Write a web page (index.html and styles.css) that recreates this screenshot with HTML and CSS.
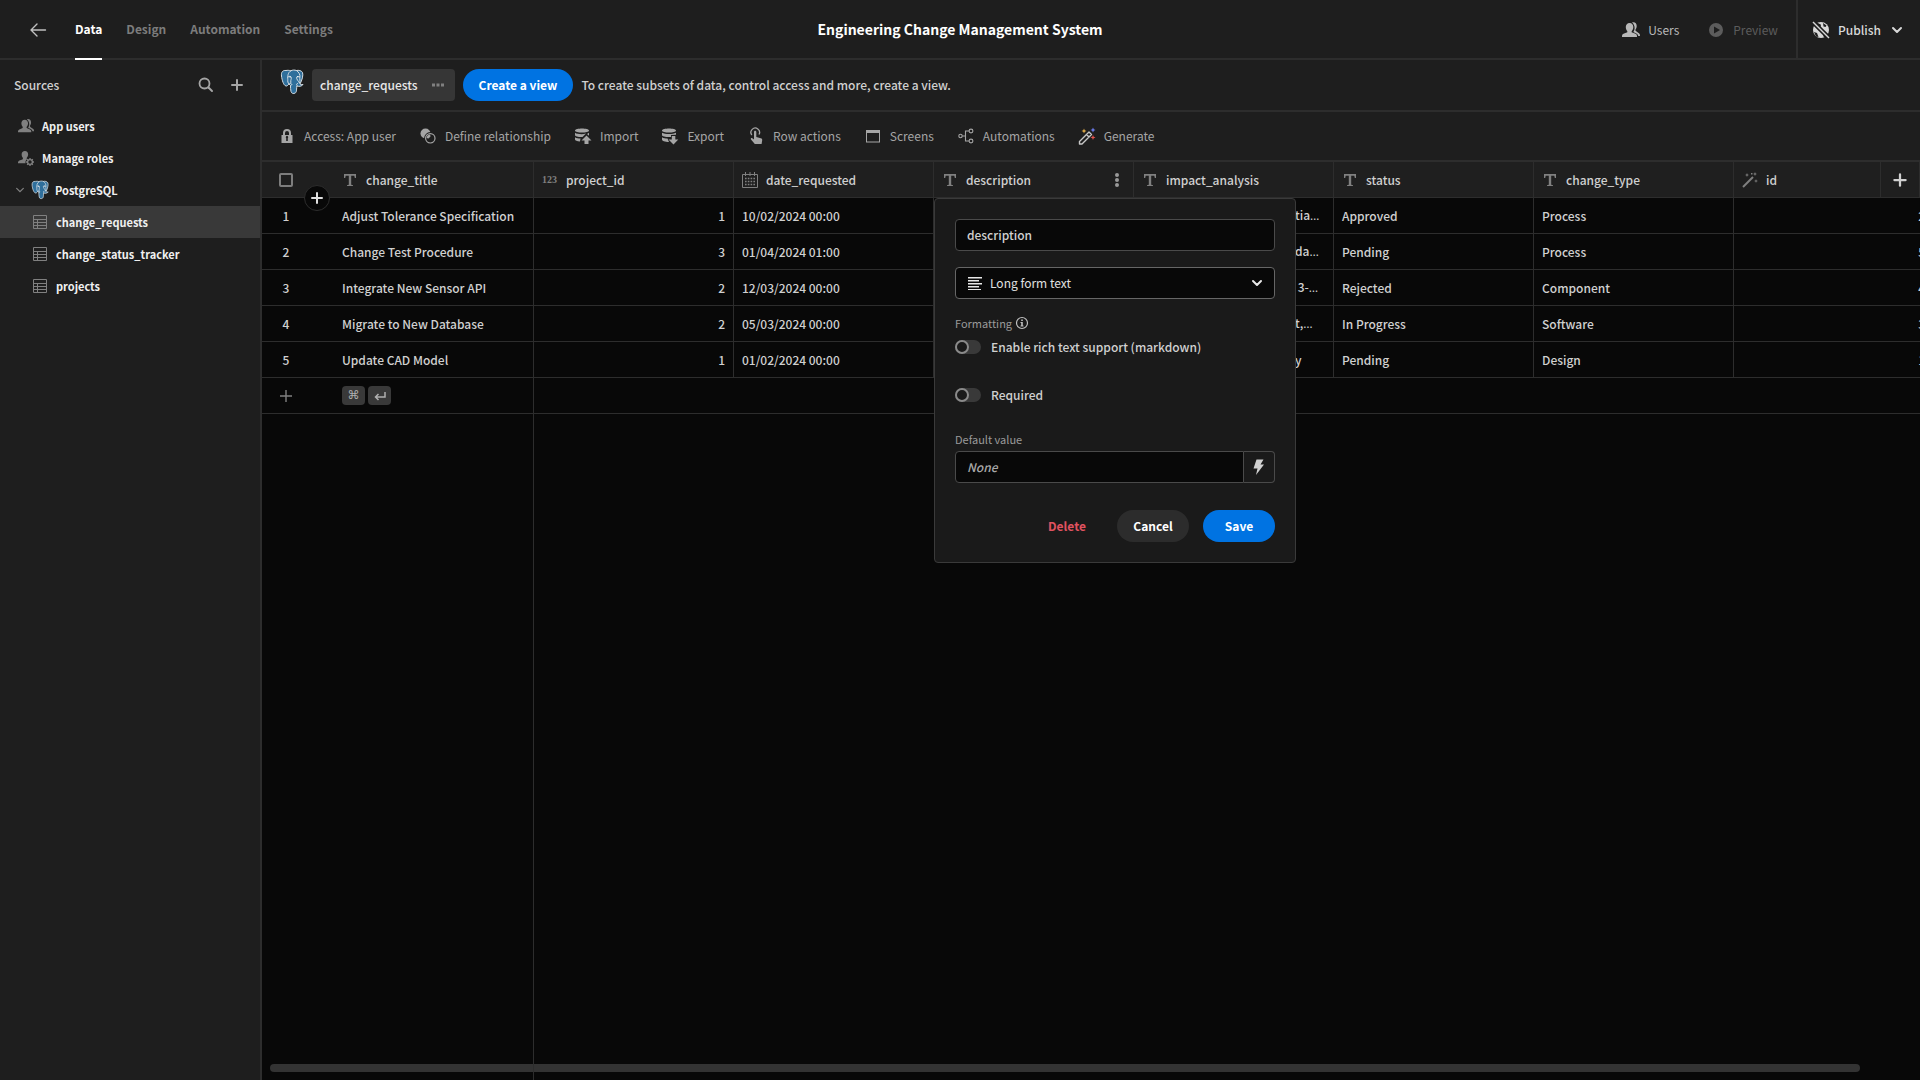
FILE: index.html
```html
<!DOCTYPE html>
<html lang="en">
<head>
<meta charset="utf-8">
<title>Engineering Change Management System</title>
<link rel="stylesheet" href="styles.css">
</head>
<body>
<svg class="sprite" aria-hidden="true">
  <symbol id="i-users" viewBox="0 0 18 18">
    <path fill="currentColor" d="M7.600 2C10 2 11.300 3.700 11.300 6c0 1.600-.6 3-1.500 3.900-.3.900-.2 1.400.5 1.700l3.200 1.200c1.200.5 1.500 1.300 1.500 3.200H0c0-1.900.3-2.700 1.500-3.200l3.200-1.200c.7-.3.8-.8.5-1.700C4.400 9 3.800 7.600 3.800 6 3.800 3.700 5.200 2 7.600 2z"/>
    <path fill="currentColor" d="M10 1.500C12.800.6 14.700 2.400 14.700 5c0 1.500-.5 2.700-1.300 3.700 0 .8.200 1.200.8 1.600l3 2.200c.7.600.8 1.500.8 2.500h-1.800c-.2-1.200-.7-1.900-1.900-2.500l-3-1.400c.7-1.100 1.300-2.500 1.300-4.200 0-2.200-.9-4-2.600-5.400z"/>
  </symbol>
  <symbol id="i-roles" viewBox="0 0 18 18">
    <path fill="currentColor" d="M7.800 1c2.300 0 3.600 1.700 3.600 3.900 0 1.500-.6 2.900-1.500 3.800-.2.700-.2 1.300.3 1.600-1.600 1-2.200 3.100-1.600 4.700H0c0-1.900.4-2.600 1.600-3.100l3.300-1.200c.7-.3.8-.9.500-1.900-.9-.9-1.300-2.300-1.300-3.900C4.100 2.700 5.500 1 7.800 1z"/>
    <circle cx="13.500" cy="13.500" r="2.700" fill="none" stroke="currentColor" stroke-width="1.500"/>
    <path stroke="currentColor" stroke-width="1.500" d="M13.500 9v2M13.500 16v2M9 13.500h2M16 13.500h2M10.300 10.300l1.400 1.400M15.300 15.300l1.400 1.400M10.300 16.700l1.400-1.400M15.300 11.700l1.400-1.400"/>
  </symbol>
  <symbol id="i-elephant" viewBox="0 0 24 26">
    <path fill="#2f6f9c" stroke="#d5dde3" stroke-width="1" stroke-linejoin="round" d="M6 1.500C2.500 1 1 3.500 1.500 7c.5 4 2 9.500 4.500 10 1.200.2 2-.9 3-2 .8.700 1.400.9 1.500 1.500.2 2-.1 4 .5 6 .5 2 2.500 2.500 4.200 1.500 1.300-.8 1.300-2 1.600-7 1.700.7 5.200.5 6.200-1.500-1.500.2-2.700.2-3-.5C22 11.500 23.500 6 22.500 3.500 21.500 1.500 18.500 1 16.500 1.500 14.500.8 12.500.9 10.800 1.800 9 1.200 7.500 1.200 6 1.500z"/>
    <path fill="none" stroke="#d5dde3" stroke-width="1" stroke-linecap="round" d="M10.800 1.800C7.800 3.500 7.600 7 7.800 10.500c0 1.800-.3 3.200 1.200 4.500M8 8c1-1 2.800-.9 3.200.2.500 1.500-.7 3-.4 4.800.2 1.200-.7 1.900-1.800 2M16.500 1.500C19 3 20.500 6 19.800 8.500c-.3 1.600.8 3.200-.2 5.500M19.800 8c-1.200-.7-3.300-.5-3.300.5 0 1.700 1.800 3.500 3 5.500M10.800 14.500c1.500.5 1.500 1.500 0 2M17 16.500c-.8-.7-.7-2 .5-2"/>
    <path fill="#fff" d="M9.500 7.500h1.300v1H9.500zM17 7.300h1.300v1H17z"/>
  </symbol>
  <symbol id="i-table" viewBox="0 0 16 16">
    <path fill="none" stroke="currentColor" d="M1.500 1.500h13v13h-13zM1.500 5.500h13M1.500 8.500h13M1.500 11.500h13M5.500 5.500v9"/>
  </symbol>
  <symbol id="i-plus" viewBox="0 0 16 16">
    <path stroke="currentColor" stroke-width="2" stroke-linecap="round" d="M8 3v10M3 8h10"/>
  </symbol>
  <symbol id="i-chevron" viewBox="0 0 12 12">
    <path fill="none" stroke="currentColor" stroke-width="2" stroke-linecap="round" stroke-linejoin="round" d="M2 4l4 4 4-4"/>
  </symbol>
  <symbol id="i-text" viewBox="0 0 16 16">
    <path fill="currentColor" d="M2 2h12v4h-1.200L12.300 3.800H9.200v9l1.800.4V14H5v-.8l1.800-.4v-9H3.700L3.200 6H2z"/>
  </symbol>
  <symbol id="i-calendar" viewBox="0 0 16 16">
    <path fill="none" stroke="currentColor" d="M.5 2.500h15v13H.5zM3.500 0v4M8 0v4M12.500 0v4"/>
    <path stroke="currentColor" stroke-width="1.600" stroke-dasharray="1.600 1.200" d="M3 6.500h10.500M3 9.500h10.500M3 12.500h10.500"/>
  </symbol>
  <symbol id="i-wand" viewBox="0 0 16 16">
    <path stroke="currentColor" stroke-width="2" d="M1 15L11 5"/>
    <path fill="currentColor" d="M5 1l.6 1.400L7 3l-1.400.6L5 5l-.6-1.400L3 3l1.400-.6zM13 0l.6 1.400L15 2l-1.400.6L13 4l-.6-1.400L11 2l1.400-.6zM14 7l.5 1.500L16 9l-1.500.5L14 11l-.5-1.500L12 9l1.500-.5zM9 1h1.500v1.500H9z"/>
  </symbol>
</svg>

<header class="topbar">
  <div class="topbar-left">
    <button class="icon-btn back" aria-label="Back">
      <svg width="18" height="18" viewBox="0 0 18 18"><path fill="none" stroke="currentColor" stroke-width="1.400" stroke-linecap="round" stroke-linejoin="round" d="M16.500 9h-14M8 3L2 9l6 6"/></svg>
    </button>
    <nav class="tabs">
      <a class="tab active" href="#">Data</a>
      <a class="tab" href="#">Design</a>
      <a class="tab" href="#">Automation</a>
      <a class="tab" href="#">Settings</a>
    </nav>
  </div>
  <h1 class="app-title">Engineering Change Management System</h1>
  <div class="topbar-right">
    <button class="top-action"><svg width="18" height="18"><use href="#i-users"/></svg>Users</button>
    <button class="top-action" disabled>
      <svg width="18" height="18" viewBox="0 0 18 18"><path fill="currentColor" fill-rule="evenodd" d="M9 2a7 7 0 100 14A7 7 0 009 2zM7 5.500v7L13 9z"/></svg>Preview</button>
    <button class="top-action publish">
      <svg width="18" height="18" viewBox="0 0 18 18"><circle cx="9" cy="9" r="8" fill="currentColor"/><path fill="#1e1e1e" d="M5 1.500l4 2.300-.5 2.500-3.300-2.800zM11 2l3.500 2.500-1 1.500-2-.5zM2 11l3 1 1.500 4-2.500-.5zM11 13l2-1 1 3-2 2z"/><path stroke="#1e1e1e" stroke-width="4.500" d="M0 0l18 18"/><path stroke="currentColor" stroke-width="1.500" d="M1 1l16 16"/></svg>
      Publish
      <svg class="publish-chevron" width="12" height="12"><use href="#i-chevron"/></svg>
    </button>
  </div>
</header>

<div class="workspace">
  <aside class="sidebar">
    <div class="sidebar-head">
      <h2 class="sidebar-title">Sources</h2>
      <button class="icon-btn" aria-label="Search">
        <svg width="16" height="16" viewBox="0 0 16 16"><circle cx="6.500" cy="6.500" r="5" fill="none" stroke="currentColor" stroke-width="1.800"/><path stroke="currentColor" stroke-width="2" stroke-linecap="round" d="M10.500 10.500L14 14"/></svg>
      </button>
      <button class="icon-btn" aria-label="Add source"><svg width="16" height="16"><use href="#i-plus"/></svg></button>
    </div>
    <nav class="sources">
      <a class="source" href="#"><svg width="16" height="16"><use href="#i-users"/></svg>App users</a>
      <a class="source" href="#"><svg width="16" height="16"><use href="#i-roles"/></svg>Manage roles</a>
      <a class="source group" href="#"><svg class="caret" width="10" height="10" viewBox="0 0 12 12"><path fill="none" stroke="currentColor" stroke-width="1.500" stroke-linecap="round" d="M2 4l4 4 4-4"/></svg><svg width="18" height="20"><use href="#i-elephant"/></svg>PostgreSQL</a>
      <a class="source nested selected" href="#"><svg width="16" height="16"><use href="#i-table"/></svg>change_requests</a>
      <a class="source nested" href="#"><svg width="16" height="16"><use href="#i-table"/></svg>change_status_tracker</a>
      <a class="source nested" href="#"><svg width="16" height="16"><use href="#i-table"/></svg>projects</a>
    </nav>
  </aside>

  <main class="content">
    <div class="viewbar">
      <svg class="viewbar-logo" width="24" height="26"><use href="#i-elephant"/></svg>
      <button class="view-tab">change_requests
        <svg width="12" height="12" viewBox="0 0 12 12"><path fill="currentColor" d="M0 4.500h3v3H0zM4.500 4.500h3v3h-3zM9 4.500h3v3H9z"/></svg>
      </button>
      <button class="btn btn-primary">Create a view</button>
      <p class="viewbar-hint">To create subsets of data, control access and more, create a view.</p>
    </div>

    <div class="toolbar">
      <button class="tool"><svg width="18" height="18" viewBox="0 0 18 18"><path fill="currentColor" fill-rule="evenodd" d="M3.500 8H5V6a4 4 0 018 0v2h1.500v8h-11zM7 8h4V6a2 2 0 00-4 0zm1.200 3v3h1.600v-3a1.200 1.200 0 10-1.600 0z"/></svg>Access: App user</button>
      <button class="tool"><svg width="18" height="18" viewBox="0 0 18 18"><circle cx="6.500" cy="6.500" r="5" fill="currentColor"/><circle cx="11.300" cy="11.300" r="4.700" fill="none" stroke="#1e1e1e" stroke-width="3"/><circle cx="11.300" cy="11.300" r="4.700" fill="none" stroke="currentColor" stroke-width="1.200"/><path fill="currentColor" d="M8.500 8.500l2.500-1 .5 2-2 2-2-.5z"/></svg>Define relationship</button>
      <button class="tool"><svg width="18" height="18" viewBox="0 0 18 18"><path fill="currentColor" d="M1 3.500C1 .8 15 .8 15 3.500S1 6.200 1 3.500zM1 5.700c2 1.600 8 1.800 11 .9L8.500 10C5 10.200 1 9.500 1 8zM15 5.700v3L13 7zM1 10.200c1.500 1 3.500 1.300 5.500 1.300L6 14.500c-3-.2-5-1-5-2zM12.500 8.500l5 5H14.500V17h-4v-3.500h-3z"/></svg>Import</button>
      <button class="tool"><svg width="18" height="18" viewBox="0 0 18 18"><path fill="currentColor" d="M1 3.500C1 .8 15 .8 15 3.500S1 6.200 1 3.500zM1 5.700C4 7.500 12 7.500 15 5.700v2.100l-5 .2v2C5 10.200 1 9.500 1 8zM1 10.200c1.500 1 3.500 1.300 5.500 1.300L8 15c-4 0-7-1-7-2.500zM10.800 9h3.500v3.500h3L12.500 17.500l-5-5h3.300z"/></svg>Export</button>
      <button class="tool"><svg width="18" height="18" viewBox="0 0 18 18"><path fill="none" stroke="currentColor" stroke-width="1.300" d="M4.800 8A4.300 4.300 0 1112 7.500"/><path fill="currentColor" d="M7 5c0-1.600 2.300-1.600 2.300 0v5l4.500 1.200c1.200.3 1.500 1 1.400 2L14.600 17H7.800L4 12.500c-.7-1 .4-1.900 1.300-1.200L7 12.500z"/></svg>Row actions</button>
      <button class="tool"><svg width="18" height="18" viewBox="0 0 18 18"><path fill="currentColor" fill-rule="evenodd" d="M2 3h14v12.500H2zM3 6v8.500h12V6z"/></svg>Screens</button>
      <button class="tool"><svg width="18" height="18" viewBox="0 0 18 18"><g fill="none" stroke="currentColor" stroke-width="1.100"><circle cx="3.500" cy="9" r="1.700"/><circle cx="14" cy="4" r="1.900"/><circle cx="14" cy="14" r="1.900"/><path d="M5.200 9H8M12 4H8.500v10H12"/></g></svg>Automations</button>
      <button class="tool"><svg width="18" height="18" viewBox="0 0 18 18"><path fill="none" stroke="#c8c8c8" stroke-width="1.400" stroke-linejoin="round" d="M1.500 14.500l9.500-9.500 2.500 2.500L4 17H1.500zM8.500 7.500L11 10"/><path fill="#e8b04a" d="M6 1.500l.7 1.800 1.800.7-1.800.7L6 6.500l-.7-1.800L3.500 4l1.800-.7z"/><path fill="#6b7bea" d="M15 .5l.8 1.700 1.700.8-1.700.8L15 5.500l-.8-1.700-1.700-.8 1.700-.8z"/><path fill="#e5534b" d="M15 8l.7 1.800 1.800.7-1.800.7L15 13l-.7-1.800-1.800-.7 1.800-.7z"/></svg>Generate</button>
    </div>

    <section class="grid">
      <table class="grid-table">
        <colgroup>
          <col class="col-gutter"><col><col><col><col><col><col><col><col>
        </colgroup>
        <thead>
          <tr>
            <th class="gutter"><input class="row-check" type="checkbox" aria-label="Select all rows"></th>
            <th><div class="head-cell"><svg width="16" height="16"><use href="#i-text"/></svg>change_title</div></th>
            <th><div class="head-cell"><span class="num-icon">123</span>project_id</div></th>
            <th><div class="head-cell"><svg width="16" height="16"><use href="#i-calendar"/></svg>date_requested</div></th>
            <th><div class="head-cell"><svg width="16" height="16"><use href="#i-text"/></svg>description
              <button class="icon-btn col-menu" aria-label="Column options"><svg width="16" height="16" viewBox="0 0 16 16"><g fill="currentColor"><circle cx="8" cy="3" r="2"/><circle cx="8" cy="8" r="2"/><circle cx="8" cy="13" r="2"/></g></svg></button></div></th>
            <th><div class="head-cell"><svg width="16" height="16"><use href="#i-text"/></svg>impact_analysis</div></th>
            <th><div class="head-cell"><svg width="16" height="16"><use href="#i-text"/></svg>status</div></th>
            <th><div class="head-cell"><svg width="16" height="16"><use href="#i-text"/></svg>change_type</div></th>
            <th><div class="head-cell"><svg width="16" height="16"><use href="#i-wand"/></svg>id</div></th>
          </tr>
        </thead>
        <tbody>
          <tr><td class="gutter">1</td><td>Adjust Tolerance Specification</td><td class="num">1</td><td>10/02/2024 00:00</td><td></td><td class="tail">tia<span class="dots">…</span></td><td>Approved</td><td>Process</td><td class="num">2</td></tr>
          <tr><td class="gutter">2</td><td>Change Test Procedure</td><td class="num">3</td><td>01/04/2024 01:00</td><td></td><td class="tail">da<span class="dots">…</span></td><td>Pending</td><td>Process</td><td class="num">5</td></tr>
          <tr><td class="gutter">3</td><td>Integrate New Sensor API</td><td class="num">2</td><td>12/03/2024 00:00</td><td></td><td class="tail">&nbsp;3-<span class="dots">…</span></td><td>Rejected</td><td>Component</td><td class="num">4</td></tr>
          <tr><td class="gutter">4</td><td>Migrate to New Database</td><td class="num">2</td><td>05/03/2024 00:00</td><td></td><td class="tail">t,<span class="dots">…</span></td><td>In Progress</td><td>Software</td><td class="num">3</td></tr>
          <tr><td class="gutter">5</td><td>Update CAD Model</td><td class="num">1</td><td>01/02/2024 00:00</td><td></td><td class="tail">y</td><td>Pending</td><td>Design</td><td class="num">1</td></tr>
          <tr class="add-row">
            <td class="gutter"><button class="icon-btn add-row-btn" aria-label="Add row"><svg width="16" height="16" viewBox="0 0 16 16"><path stroke="currentColor" stroke-width="1.400" d="M8 2v12M2 8h12"/></svg></button></td>
            <td colspan="8"><div class="keys"><kbd>⌘</kbd><kbd><svg width="12" height="12" viewBox="0 0 12 12"><path fill="none" stroke="currentColor" stroke-width="1.500" d="M11 2v5H2M4.500 4L1.500 7l3 3"/></svg></kbd></div></td>
          </tr>
        </tbody>
      </table>
      <button class="add-column" aria-label="Add column"><svg width="18" height="18" viewBox="0 0 16 16"><use href="#i-plus"/></svg></button>
      <button class="insert-row" aria-label="Insert row"><svg width="16" height="16"><use href="#i-plus"/></svg></button>
      <div class="scroll-thumb"></div>

      <form class="popover">
        <input class="field" type="text" value="description" aria-label="Column name">
        <div class="type-select">
          <svg class="type-icon" width="16" height="16" viewBox="0 0 16 16"><path fill="currentColor" d="M1 2h14v1.500H1zM1 5h11v1.500H1zM1 8h14v1.500H1zM1 11h11v1.500H1zM1 14h13v1H1z"/></svg>
          <select class="field" aria-label="Column type"><option>Long form text</option></select>
          <svg class="type-chevron" width="12" height="12"><use href="#i-chevron"/></svg>
        </div>
        <div class="form-label">Formatting
          <svg width="14" height="14" viewBox="0 0 14 14"><circle cx="7" cy="7" r="5.500" fill="none" stroke="currentColor" stroke-width="1.200"/><path fill="currentColor" d="M6.200 3.500h1.600V5H6.200zM5.500 6h2.300v3.500h.7v1h-3v-1h.7V7h-.7z"/></svg>
        </div>
        <label class="switch"><input type="checkbox">Enable rich text support (markdown)</label>
        <label class="switch required"><input type="checkbox">Required</label>
        <label class="form-label default-label" for="default-value">Default value</label>
        <div class="binding">
          <input class="field" id="default-value" type="text" placeholder="None">
          <button class="bolt" type="button" aria-label="Bind value"><svg width="16" height="16" viewBox="0 0 16 16"><path fill="currentColor" d="M5.500.5h7L9.500 5.500H13L5 16l1.500-6.500h-4z"/></svg></button>
        </div>
        <div class="form-actions">
          <button class="btn btn-danger" type="button">Delete</button>
          <button class="btn btn-secondary" type="button">Cancel</button>
          <button class="btn btn-primary" type="button">Save</button>
        </div>
      </form>
    </section>
  </main>
</div>
</body>
</html>
```

FILE: styles.css
```css
:root {
  --bg: #1e1e1e;
  --bg-deep: #080808;
  --panel: #1a1a1a;
  --line: #2d2d2d;
  --line-field: #4a4a4a;
  --text: #d0d0d0;
  --muted: #9a9a9a;
  --blue: #0073e2;
}

*, *::before { box-sizing: border-box; }

body {
  margin: 0;
  min-height: 100vh;
  display: flex;
  flex-direction: column;
  background: var(--bg);
  color: var(--text);
  font: 12px/20px "Noto Sans CJK SC", "Noto Sans", sans-serif;
}

button, input, select { font: inherit; color: inherit; }
button { padding: 0; border: 0; background: none; cursor: pointer; }
a { color: inherit; text-decoration: none; }
h1, h2, p { margin: 0; }
svg { display: block; flex: none; }
.sprite { position: absolute; width: 0; height: 0; }
.icon-btn { display: flex; color: #a5a5a5; }

/* Top bar */
.topbar {
  display: grid;
  grid-template-columns: 1fr auto 1fr;
  height: 60px;
  border-bottom: 2px solid var(--line);
}
.topbar-left { display: flex; align-items: center; padding-left: 29px; gap: 28px; }
.back { color: #c0c0c0; }
.tabs { display: flex; gap: 24px; align-self: stretch; }
.tab {
  display: flex;
  align-items: center;
  height: 60px;
  font-weight: 700;
  color: #7c7c7c;
  border-bottom: 2px solid transparent;
}
.tab.active { color: #fff; border-bottom-color: #fff; }
.app-title { align-self: center; padding-bottom: 2px; font-size: 14px; font-weight: 700; color: #fff; }
.topbar-right { display: flex; justify-content: flex-end; }
.top-action { display: flex; align-items: center; gap: 8px; margin-right: 28px; color: #b8b8b8; }
.top-action:disabled { margin-right: 18px; color: #5c5c5c; }
.publish { margin: 0; padding: 0 17px 0 14px; border-left: 2px solid var(--line); color: #d8d8d8; font-weight: 500; }
.publish-chevron { margin-left: 2px; }

/* Sidebar */
.workspace { flex: 1; display: flex; min-height: 0; }
.sidebar { width: 262px; flex: none; border-right: 2px solid var(--line); }
.sidebar-head { display: flex; align-items: center; gap: 15px; height: 50px; padding: 0 15px 0 14px; }
.sidebar-title { margin-right: auto; font-size: 12px; font-weight: 500; }
.source {
  display: flex;
  align-items: center;
  gap: 8px;
  height: 32px;
  padding-left: 18px;
  font-size: 11px;
  font-weight: 700;
  color: #f0f0f0;
}
.source svg { color: #808080; }
.source.group { gap: 6px; padding-left: 15px; }
.source.nested { padding-left: 32px; }
.source.selected { background: #393939; }

/* View bar and toolbar */
.content { flex: 1; min-width: 0; display: flex; flex-direction: column; }
.viewbar { display: flex; align-items: center; gap: 8px; height: 52px; padding-left: 18px; border-bottom: 2px solid var(--line); }
.viewbar-logo { align-self: flex-start; margin-top: 9px; }
.view-tab {
  display: flex;
  align-items: center;
  gap: 14px;
  height: 32px;
  padding: 0 11px 0 8px;
  border-radius: 4px;
  background: #363636;
  color: #e8e8e8;
  font-weight: 500;
}
.view-tab svg { color: #808080; }
.viewbar-hint { font-weight: 500; }
.btn { min-width: 72px; height: 32px; padding: 0 16px; border-radius: 16px; font-weight: 700; color: #fff; }
.btn-primary { background: var(--blue); }
.btn-secondary { background: #2c2c2c; }
.btn-danger { color: #e05260; }

.toolbar { display: flex; gap: 23px; height: 50px; padding-left: 16px; border-bottom: 2px solid var(--line); }
.tool { display: flex; align-items: center; gap: 8px; color: #a5a5a5; }

/* Data grid */
.grid { position: relative; flex: 1; overflow: hidden; background: var(--bg-deep); }
.grid::after {
  content: "";
  position: absolute;
  top: 0;
  bottom: 0;
  left: 271px;
  width: 1px;
  background: var(--line);
}
.grid-table { width: 1672px; table-layout: fixed; border-collapse: separate; border-spacing: 0; }
.col-gutter { width: 72px; }
.grid-table th, .grid-table td {
  height: 36px;
  padding: 0 8px;
  border-right: 1px solid var(--line);
  border-bottom: 1px solid var(--line);
  font-weight: 500;
  text-align: left;
  white-space: nowrap;
  overflow: hidden;
}
.grid-table th { background: #1f1f1f; }
.grid-table .gutter { padding: 0 24px 0 0; border-right: 0; text-align: center; }
.grid-table .num { text-align: right; }
.grid-table .tail { padding-left: 161px; }
.dots { font-family: "Open Sans", sans-serif; }
.grid-table .add-row td { border-right: 0; }
.head-cell { display: flex; align-items: center; gap: 8px; }
.head-cell > svg { color: #808080; }
.num-icon { width: 16px; font: 700 10px/16px "Liberation Serif", serif; color: #808080; }
.col-menu { margin-left: auto; color: #999; }
.row-check {
  appearance: none;
  display: block;
  width: 14px;
  height: 14px;
  margin: 0 auto;
  border: 2px solid #7d7d7d;
  border-radius: 2px;
}
.add-row-btn { margin: 0 auto; color: #808080; }
.keys { display: flex; gap: 3px; }
kbd {
  display: flex;
  align-items: center;
  justify-content: center;
  width: 23px;
  height: 19px;
  border-radius: 4px;
  background: #393939;
  color: #b0b0b0;
  font: 12px/19px "DejaVu Sans", sans-serif;
}
.add-column {
  position: absolute;
  top: 0;
  right: 0;
  display: flex;
  align-items: center;
  justify-content: center;
  width: 40px;
  height: 36px;
  border: solid var(--line);
  border-width: 0 1px 1px;
  background: #1f1f1f;
}
.insert-row {
  position: absolute;
  top: 23px;
  left: 42px;
  display: flex;
  align-items: center;
  justify-content: center;
  width: 26px;
  height: 26px;
  border: 1px solid var(--line);
  border-radius: 50%;
  background: var(--bg-deep);
  color: #e0e0e0;
}
.scroll-thumb {
  position: absolute;
  left: 8px;
  right: 60px;
  bottom: 8px;
  height: 8px;
  border-radius: 4px;
  background: #333;
}

/* Column editor */
.popover {
  position: absolute;
  top: 36px;
  left: 672px;
  display: flex;
  flex-direction: column;
  width: 362px;
  padding: 20px;
  border: 1px solid #3a3a3a;
  border-radius: 4px;
  background: var(--panel);
}
.field {
  width: 100%;
  height: 32px;
  padding: 0 11px 2px;
  border: 1px solid var(--line-field);
  border-radius: 4px;
  outline: 0;
  background: var(--bg-deep);
  font-weight: 500;
}
.type-select { position: relative; margin: 16px 0; }
.type-select .field { display: block; appearance: none; padding: 0 34px; border-color: #666; font-weight: 400; color: #e0e0e0; }
.type-icon, .type-chevron { position: absolute; pointer-events: none; color: #e8e8e8; }
.type-icon { top: 8px; left: 12px; }
.type-chevron { top: 10px; right: 12px; }
.form-label { display: flex; align-items: center; gap: 3px; font-size: 11px; line-height: 16px; color: var(--muted); }
.form-label svg { color: #c0c0c0; }
.switch { display: flex; align-items: center; gap: 10px; height: 32px; font-weight: 500; }
.switch input {
  appearance: none;
  width: 26px;
  height: 14px;
  margin: 0;
  border-radius: 7px;
  background: #393939;
}
.switch input::before {
  content: "";
  display: block;
  width: 14px;
  height: 14px;
  border: 2px solid #8a8a8a;
  border-radius: 50%;
  background: var(--panel);
}
.required { margin-top: 16px; }
.default-label { margin: 20px 0 4px; }
.binding { display: flex; }
.binding .field { flex: 1; min-width: 0; border-radius: 4px 0 0 4px; }
.field::placeholder { color: #a8a8a8; font-style: italic; opacity: 1; }
.bolt {
  display: flex;
  align-items: center;
  justify-content: center;
  width: 31px;
  border: 1px solid var(--line-field);
  border-left: 0;
  border-radius: 0 4px 4px 0;
}
.form-actions { display: flex; justify-content: flex-end; gap: 14px; margin-top: 27px; }
```
